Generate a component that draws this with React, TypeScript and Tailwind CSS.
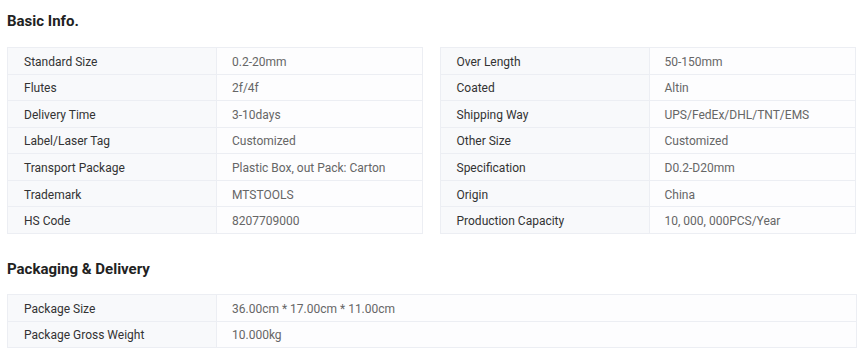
import React from "react";

const left: [string, string][] = [
  ["Standard Size", "0.2-20mm"],
  ["Flutes", "2f/4f"],
  ["Delivery Time", "3-10days"],
  ["Label/Laser Tag", "Customized"],
  ["Transport Package", "Plastic Box, out Pack: Carton"],
  ["Trademark", "MTSTOOLS"],
  ["HS Code", "8207709000"],
];
const right: [string, string][] = [
  ["Over Length", "50-150mm"],
  ["Coated", "Altin"],
  ["Shipping Way", "UPS/FedEx/DHL/TNT/EMS"],
  ["Other Size", "Customized"],
  ["Specification", "D0.2-D20mm"],
  ["Origin", "China"],
  ["Production Capacity", "10, 000, 000PCS/Year"],
];
const pack: [string, string][] = [
  ["Package Size", "36.00cm * 17.00cm * 11.00cm"],
  ["Package Gross Weight", "10.000kg"],
];

function Table({ rows, className }: { rows: [string, string][]; className?: string }) {
  return (
    <div className={"border-t border-l border-[#eceef3] " + (className ?? "")}>
      {rows.map(([k, v]) => (
        <div key={k} className="flex h-[26.57px] border-b border-[#eceef3]">
          <div className="w-[209px] shrink-0 bg-[#f8f9fb] border-r border-[#eceef3] pl-[16px] pt-[2px] flex items-center text-[#333333]">
            {k}
          </div>
          <div className="flex-1 bg-[#fdfdfe] border-r border-[#eceef3] pl-[15px] pt-[2px] flex items-center text-[#666666]">
            {v}
          </div>
        </div>
      ))}
    </div>
  );
}

export default function App() {
  return (
    <div
      className="w-[860px] h-[362px] bg-white pl-[7px] pr-[4px] text-[12px]"
      style={{ fontFamily: "Roboto, 'Liberation Sans', sans-serif" }}
    >
      <div className="h-[47px] pt-[10px]">
        <h2 className="text-[15px] font-bold text-[#222222] leading-[22px]">Basic Info.</h2>
      </div>
      <div className="flex gap-[17px]">
        <Table rows={left} className="w-[416px]" />
        <Table rows={right} className="w-[417px]" />
      </div>
      <div className="h-[60px] pt-[24px]">
        <h2 className="text-[15px] font-bold text-[#222222] leading-[22px]">Packaging &amp; Delivery</h2>
      </div>
      <Table rows={pack} className="w-[850px]" />
    </div>
  );
}
